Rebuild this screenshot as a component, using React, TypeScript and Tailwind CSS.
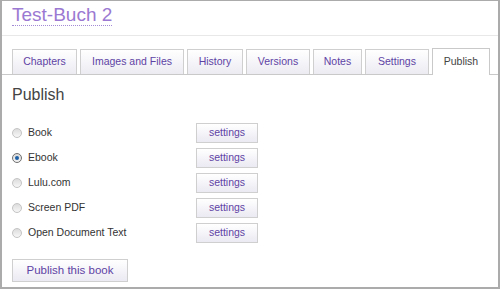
import React from "react";

const tabs = [
  { label: "Chapters", w: "w-[65px]" },
  { label: "Images and Files", w: "w-[104px]" },
  { label: "History", w: "w-[56px]" },
  { label: "Versions", w: "w-[64px]" },
  { label: "Notes", w: "w-[49px]" },
  { label: "Settings", w: "w-[64px]" },
];

const rows = [
  { label: "Book", checked: false },
  { label: "Ebook", checked: true },
  { label: "Lulu.com", checked: false },
  { label: "Screen PDF", checked: false },
  { label: "Open Document Text", checked: false },
];

function Radio({ checked }: { checked: boolean }) {
  if (checked) {
    return (
      <span className="flex h-[10px] w-[10px] items-center justify-center rounded-full border border-[#6f6f6f] bg-gradient-to-b from-[#d9d9d9] to-[#f4f4f4]">
        <span className="h-[4px] w-[4px] rounded-full bg-[#1d5fa6]" />
      </span>
    );
  }
  return (
    <span className="block h-[10px] w-[10px] rounded-full border border-[#c4c4c4] bg-gradient-to-b from-[#dcdcdc] to-[#f7f7f7]" />
  );
}

export default function App() {
  return (
    <div className="h-[289px] w-[500px] overflow-hidden border-2 border-t border-[#ababab] bg-white font-['Liberation_Sans',Arial,sans-serif]">
      <div className="h-[35px] border-b border-[#e8e8e8] pl-[10px] pt-[3px]">
        <span className="inline-block border-b border-dotted border-[#a38ad6] text-[19px] leading-[21px] text-[#9b79d2]">
          Test-Buch 2
        </span>
      </div>

      <div className="mt-[12px] flex h-[27px] items-end gap-[3px] border-b border-[#c9c9c9] pl-[10px]">
        {tabs.map((t) => (
          <div
            key={t.label}
            className={`${t.w} flex h-[25px] items-center justify-center border border-b-0 border-[#cfcfcf] bg-gradient-to-b from-white to-[#ecebf2] text-[10.5px] text-[#5e43a4]`}
          >
            {t.label}
          </div>
        ))}
        <div className="-mb-px flex h-[27px] w-[58px] items-center justify-center border border-b-0 border-[#c9c9c9] bg-white text-[10.5px] text-[#444]">
          Publish
        </div>
      </div>

      <div className="pl-[10px]">
        <h1 className="mt-[11px] text-[16px] leading-[18px] text-[#444]">Publish</h1>

        <div className="mt-[19px] flex flex-col gap-[5px]">
          {rows.map((r) => (
            <div key={r.label} className="flex h-[20px] items-center">
              <div className="flex w-[184px] items-center gap-[6px]">
                <Radio checked={r.checked} />
                <span className="text-[10.5px] text-[#333]">{r.label}</span>
              </div>
              <div className="flex h-[20px] w-[62px] items-center justify-center border border-[#cfcfcf] bg-gradient-to-b from-white to-[#ebe9f2] text-[10.5px] text-[#5e43a4]">
                settings
              </div>
            </div>
          ))}
        </div>

        <div className="mt-[16px] flex h-[23px] w-[116px] items-center justify-center border border-[#cfcfcf] bg-gradient-to-b from-white to-[#ebe9f2] text-[11.5px] text-[#5e43a4]">
          Publish this book
        </div>
      </div>
    </div>
  );
}
